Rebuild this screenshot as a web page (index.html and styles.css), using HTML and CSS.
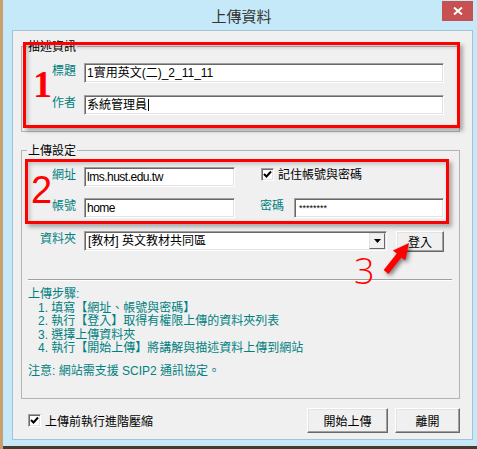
FILE: index.html
```html
<!DOCTYPE html>
<html>
<head>
    <meta charset="UTF-8">
    <title>上傳資料</title>
    <link rel="stylesheet" href="styles.css">
</head>
<body>
    <div class="window">
        <div class="titlebar">
            <span class="title">上傳資料</span>
            <button class="close-btn">
                <svg width="10" height="8" viewBox="0 0 10 8"><path d="M1 0.5 L9 7.5 M9 0.5 L1 7.5" stroke="#fff" stroke-width="2"/></svg>
            </button>
        </div>

        <div class="client">
            <!-- 描述資訊 -->
            <div class="group group-desc">
                <span class="legend">描述資訊</span>
                <div class="desc-grid">
                    <label class="field-label">標題</label>
                    <div class="textbox">1實用英文(二)_2_11_11</div>
                    <label class="field-label">作者</label>
                    <div class="textbox">系統管理員<span class="caret"></span></div>
                </div>
            </div>

            <!-- 上傳設定 -->
            <div class="group group-upload">
                <span class="legend">上傳設定</span>
                <div class="login-grid">
                    <label class="field-label">網址</label>
                    <div class="textbox latin">lms.hust.edu.tw</div>
                    <label class="check remember">
                        <span class="checkbox"><svg width="9" height="9" viewBox="0 0 9 9"><path d="M1 4 L3.5 6.5 L8 1.5" stroke="#000" stroke-width="2" fill="none"/></svg></span>
                        記住帳號與密碼
                    </label>
                    <label class="field-label">帳號</label>
                    <div class="textbox latin">home</div>
                    <label class="field-label pw-label">密碼</label>
                    <div class="textbox password">********</div>
                </div>

                <div class="folder-row">
                    <label class="field-label">資料夾</label>
                    <div class="combo">
                        <span class="combo-text">[教材] 英文教材共同區</span>
                        <span class="combo-btn"><svg width="7" height="4" viewBox="0 0 7 4"><path d="M0 0 H7 L3.5 4 Z" fill="#000"/></svg></span>
                    </div>
                    <button class="btn login-btn">登入</button>
                </div>

                <div class="separator"></div>

                <div class="steps">
                    <div>上傳步驟:</div>
                    <ol class="steps-list">
                        <li>1. 填寫【網址、帳號與密碼】</li>
                        <li>2. 執行【登入】取得有權限上傳的資料夾列表</li>
                        <li>3. 選擇上傳資料夾</li>
                        <li>4. 執行【開始上傳】將講解與描述資料上傳到網站</li>
                    </ol>
                </div>
                <p class="note">注意: 網站需支援 SCIP2 通訊協定。</p>
            </div>

            <div class="footer">
                <label class="check">
                    <span class="checkbox"><svg width="9" height="9" viewBox="0 0 9 9"><path d="M1 4 L3.5 6.5 L8 1.5" stroke="#000" stroke-width="2" fill="none"/></svg></span>
                    上傳前執行進階壓縮
                </label>
                <div class="actions">
                    <button class="btn start-btn">開始上傳</button>
                    <button class="btn exit-btn">離開</button>
                </div>
            </div>
        </div>

        <!-- red annotations drawn over the dialog -->
        <div class="mark-box box-1"></div>
        <div class="mark-box box-2"></div>
        <span class="mark-num num-1">1</span>
        <span class="mark-num num-2">2</span>
        <span class="mark-num num-3">3</span>
        <svg class="mark-arrow" width="40" height="40" viewBox="0 0 40 40">
            <polygon points="31,5 27.3,22.5 23.4,19.4 10.3,35.9 5.7,32.1 18.8,15.6 14.9,12.5" fill="#ff0000"/>
        </svg>
    </div>
</body>
</html>
```

FILE: styles.css
```css
body {
    margin: 0;
    width: 477px;
    height: 449px;
    overflow: hidden;
    background: linear-gradient(90deg, #c9a06c 0 3px, transparent 3px), #4a392d;
    font-family: "Liberation Sans", "Noto Sans CJK TC", sans-serif;
    font-size: 12px;
}

.window {
    position: relative;
    margin-left: 3px;
    width: 474px;
    height: 446px;
    background-color: #c5e9f8;
    display: flex;
    flex-direction: column;
}

.titlebar {
    height: 30px;
    display: flex;
    align-items: center;
    justify-content: center;
    padding: 1px 0 0 3px;
    box-sizing: border-box;
}
.title {
    font-family: "Noto Sans CJK TC", sans-serif;
    font-size: 15px;
    color: #333;
}
.close-btn {
    position: absolute;
    top: 1px;
    right: 4px;
    width: 31px;
    height: 20px;
    border: none;
    padding: 0;
    background-color: #c75050;
    display: flex;
    align-items: center;
    justify-content: center;
}

.client {
    flex: 1;
    margin: 0 4px 6px 9px;
    border: 1px solid #a2c5d6;
    background-color: #f0f0f0;
    padding: 15px 12px 0 8px;
    display: flex;
    flex-direction: column;
}

/* group boxes */
.group {
    border: 1px solid #b4b4b4;
}
.group-upload {
    margin-top: 18px;
}
.legend {
    display: block;
    width: max-content;
    margin: -8px 0 0 5px;
    padding: 0 1px;
    background-color: #f0f0f0;
    font-family: "Noto Sans CJK TC", sans-serif;
    line-height: 14px;
    color: #000;
}

.field-label {
    font-family: "Noto Sans CJK TC", sans-serif;
    color: #008080;
    line-height: 14px;
    text-align: right;
    padding-right: 8px;
}

.desc-grid {
    display: grid;
    grid-template-columns: 62px 360px;
    row-gap: 12px;
    padding: 10px 0 16px;
}

.login-grid {
    display: grid;
    grid-template-columns: 62px 151px 59px 150px;
    row-gap: 11px;
    padding-top: 10px;
}
.pw-label {
    text-align: left;
    padding: 0 0 0 25px;
}

.textbox {
    height: 20px;
    box-sizing: border-box;
    background-color: #fff;
    border: 1px solid;
    border-color: #a0a0a0 #fff #fff #a0a0a0;
    box-shadow: inset 1px 1px #696969, inset -1px -1px #e3e3e3;
    padding-left: 2px;
    line-height: 18px;
    color: #000;
    white-space: nowrap;
    overflow: hidden;
    display: flex;
    align-items: center;
}
.latin {
    letter-spacing: -0.5px;
}
.password {
    font-size: 9px;
    padding-left: 4px;
}
.caret {
    display: inline-block;
    width: 1px;
    height: 12px;
    background-color: #000;
    margin-left: 1px;
}

.check {
    display: flex;
    align-items: center;
    gap: 4px;
    font-family: "Noto Sans CJK TC", sans-serif;
    color: #000;
    line-height: 14px;
}
.remember {
    grid-column: 3 / span 2;
    align-self: start;
    padding-left: 26px;
}
.checkbox {
    width: 13px;
    height: 13px;
    box-sizing: border-box;
    background-color: #fff;
    border: 1px solid;
    border-color: #a0a0a0 #fff #fff #a0a0a0;
    box-shadow: inset 1px 1px #696969, inset -1px -1px #e3e3e3;
    display: flex;
    align-items: center;
    justify-content: center;
}

.folder-row {
    display: flex;
    align-items: flex-start;
    margin-top: 13px;
}
.folder-row .field-label {
    width: 62px;
    box-sizing: border-box;
}
.combo {
    width: 303px;
    height: 20px;
    box-sizing: border-box;
    background-color: #fff;
    border: 1px solid;
    border-color: #a0a0a0 #fff #fff #a0a0a0;
    box-shadow: inset 1px 1px #696969, inset -1px -1px #e3e3e3;
    display: flex;
    padding: 1px;
}
.combo-text {
    flex: 1;
    padding-left: 2px;
    line-height: 16px;
    color: #000;
}
.combo-btn {
    width: 16px;
    box-sizing: border-box;
    background-color: #f0f0f0;
    border: 1px solid;
    border-color: #e3e3e3 #696969 #696969 #e3e3e3;
    display: flex;
    align-items: center;
    justify-content: center;
}

.btn {
    font-family: "Noto Sans CJK TC", sans-serif;
    font-size: 12px;
    color: #000;
    background-color: #f0f0f0;
    border: 1px solid;
    border-color: #fff #696969 #696969 #fff;
    box-shadow: inset -1px -1px #a0a0a0, inset 1px 1px #e3e3e3;
    padding: 0;
}
.login-btn {
    width: 48px;
    height: 21px;
    margin-left: 9px;
}

.separator {
    height: 1px;
    margin: 27px 7px 0 6px;
    background-color: #a0a0a0;
    border-bottom: 1px solid #fff;
}

.steps {
    margin-top: 7px;
    padding-left: 6px;
    color: #008080;
    line-height: 13.5px;
}
.steps-list {
    list-style: none;
    margin: 0;
    padding-left: 10px;
}
.note {
    margin: 9px 0 0 6px;
    padding-bottom: 20px;
    color: #008080;
    line-height: 13.5px;
}

.footer {
    display: flex;
    align-items: center;
    justify-content: space-between;
    margin-top: 9px;
    padding-left: 7px;
}
.actions {
    display: flex;
    gap: 7px;
}
.start-btn {
    width: 81px;
    height: 25px;
}
.exit-btn {
    width: 65px;
    height: 25px;
}

/* annotations */
.mark-box {
    position: absolute;
    border: 3px solid #ff0000;
    box-sizing: border-box;
    box-shadow: 3px 3px 4px rgba(0, 0, 0, 0.3), inset 2px 2px 4px rgba(0, 0, 0, 0.2);
}
.box-1 {
    left: 20px;
    top: 42px;
    width: 437px;
    height: 86px;
}
.box-2 {
    left: 22px;
    top: 159px;
    width: 424px;
    height: 65px;
}
.mark-num {
    position: absolute;
    color: #ff0000;
    line-height: 1;
}
.num-1 {
    left: 30px;
    top: 65px;
    font-family: "Liberation Serif", serif;
    font-weight: bold;
    font-size: 38px;
}
.num-2 {
    left: 28px;
    top: 171px;
    font-family: "Liberation Sans", sans-serif;
    font-size: 38px;
}
.num-3 {
    left: 351px;
    top: 253px;
    font-family: "Open Sans", sans-serif;
    font-weight: 300;
    font-size: 36px;
}
.mark-arrow {
    position: absolute;
    left: 375px;
    top: 238px;
    filter: drop-shadow(2px 2px 2px rgba(0, 0, 0, 0.5));
}
```
